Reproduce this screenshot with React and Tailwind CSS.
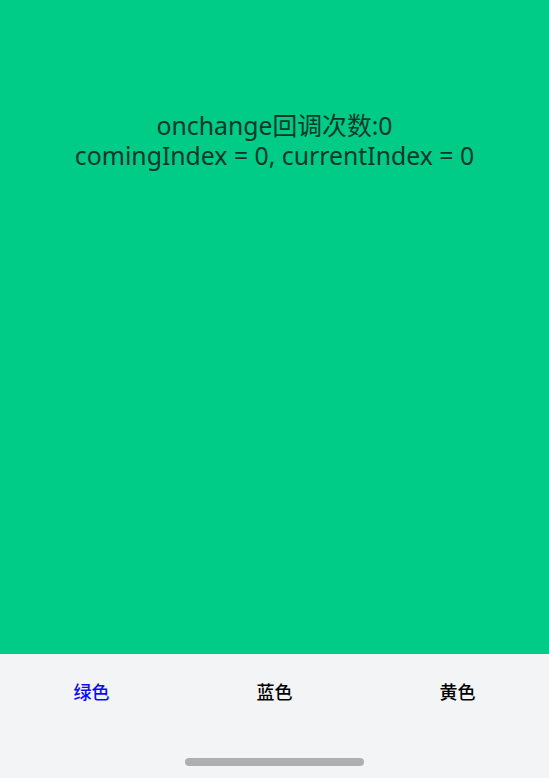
export default function App() {
  return (
    <div className="w-[549px] h-[778px] flex flex-col overflow-hidden" style={{ fontFamily: '"Noto Sans", "Noto Sans CJK SC", sans-serif' }}>
      <div className="h-[654px] bg-[#00cc88] flex flex-col items-center pt-[110px]">
        <div className="text-[24.8px] leading-[30px] text-[#10382a] text-center">onchange回调次数:0</div>
        <div className="text-[24.8px] leading-[30px] text-[#10382a] text-center">comingIndex = 0, currentIndex = 0</div>
      </div>
      <div className="flex-1 bg-[#f3f4f6] flex flex-col">
        <div className="grid grid-cols-3 h-[76px] items-center">
          <div className="text-center text-[18px] font-medium text-[#0a0aff]">绿色</div>
          <div className="text-center text-[18px] font-medium text-black">蓝色</div>
          <div className="text-center text-[18px] font-medium text-black">黄色</div>
        </div>
        <div className="flex justify-center pt-[28px]">
          <div className="w-[179px] h-[8px] rounded-full bg-[#afafaf]" />
        </div>
      </div>
    </div>
  );
}
